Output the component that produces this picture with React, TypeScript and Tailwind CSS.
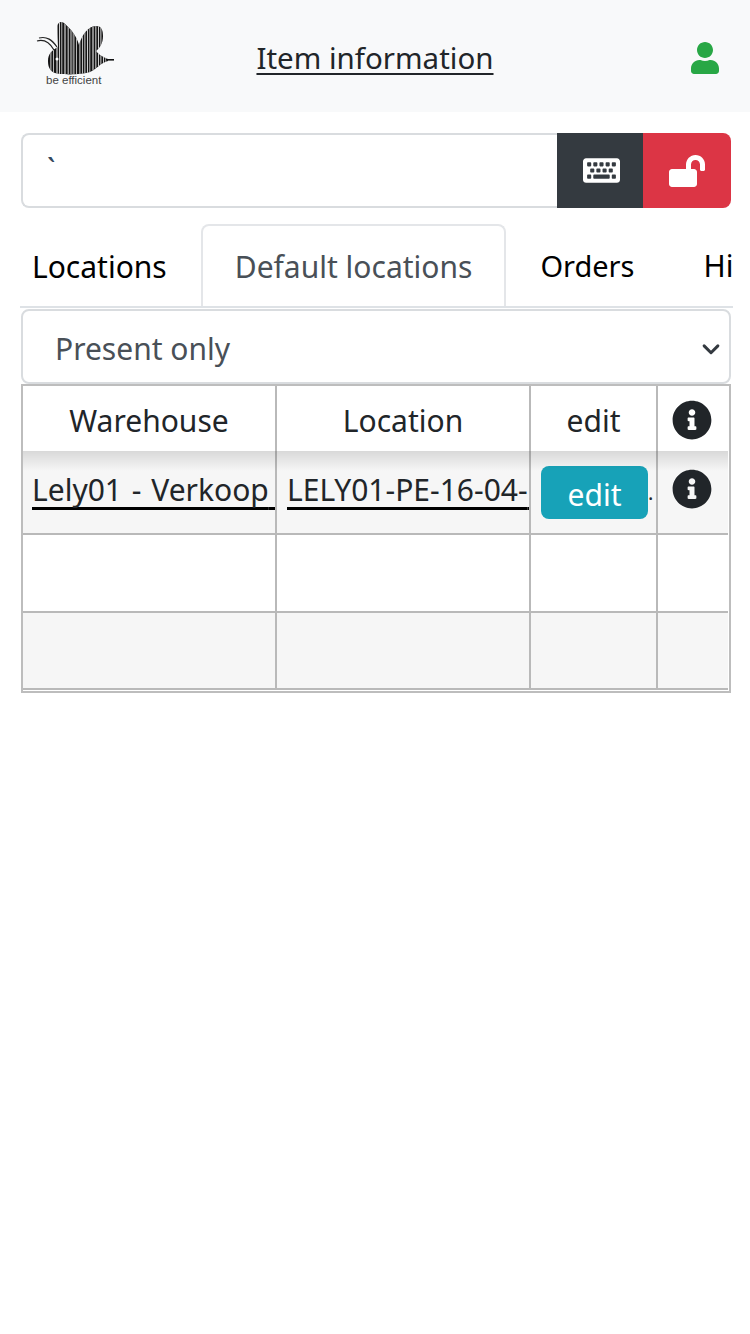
import React from 'react'
import { FaInfoCircle, FaKeyboard, FaLockOpen, FaUser } from 'react-icons/fa'

const font = { fontFamily: '"Noto Sans", "Open Sans", sans-serif' }

// white gaps and grey stripes of the barcode bee
const gaps = [
  [50.5, 0.8], [53, 0.7], [56.5, 1], [59, 0.8], [61.5, 0.7], [64, 2, '#888'], [67.5, 1.5, '#999'], [70, 2.5, '#777'], [73.5, 0.8], [76, 0.7],
  [79.5, 0.8], [82, 0.7], [84.5, 0.8], [87, 0.8], [89.5, 0.7], [92, 2, '#888'], [95, 1.5, '#999'], [98, 0.8], [100.5, 0.8], [103, 0.8], [105.5, 0.8],
] as const

function Logo() {
  return (
    <div className="relative h-[80px] w-[90px] shrink-0">
      <svg width="90" height="70" viewBox="30 15 90 70" className="block blur-[0.4px]">
        <defs>
          <clipPath id="bee">
            <path d="M48 60C48 53 52 49 58 46L57 27C57 21 62 19 65 23C72 29 77 36 79 44C82 34 88 25 96 25C102 25 103 30 103 35C103 42 100 47 96 50C99 54 103 56 108 58L108 60C100 62 97 68 90 71C82 74 60 74 55 72C50 70 48 66 48 60Z" />
          </clipPath>
        </defs>
        <g clipPath="url(#bee)">
          <rect x="45" y="15" width="66" height="65" fill="#151515" />
          {gaps.map(([x, w, c], i) => (
            <rect key={i} x={x} y="15" width={w} height="65" fill={c ?? '#fff'} />
          ))}
        </g>
        <circle cx="57" cy="58" r="1.5" fill="#fff" />
        <path d="M37 40C44 38 50 42 54 49M39 37C47 35 52 39 57 46" fill="none" stroke="#222" strokeWidth="1.2" />
        <path d="M106 58.8H114" stroke="#111" strokeWidth="1.6" />
      </svg>
      <span className="absolute left-[16px] top-[58px] text-[11.5px] leading-[13px] whitespace-nowrap text-[#444]" style={{ fontFamily: '"Liberation Sans", sans-serif' }}>
        be efficient
      </span>
    </div>
  )
}

function Row({ bg = 'bg-white', h, children, className = '' }: { bg?: string; h: string; children?: React.ReactNode; className?: string }) {
  return (
    <div className={`grid grid-cols-[254px_254px_127px_1fr] border-[#b9b9b9] ${bg} ${h} ${className}`}>
      {children ?? (
        <>
          <div className="border-r-2 border-[#b9b9b9]" />
          <div className="border-r-2 border-[#b9b9b9]" />
          <div className="border-r-2 border-[#b9b9b9]" />
          <div />
        </>
      )}
    </div>
  )
}

const linkClass = 'underline decoration-[3px] decoration-black underline-offset-[6px] [text-decoration-skip-ink:none]'

export default function App() {
  return (
    <div className="min-h-[1334px] bg-white text-[30px] text-[#212529]" style={font}>
      <header className="grid h-[112px] grid-cols-[120px_1fr_120px] items-center bg-[#f8f9fa]">
        <div className="pl-[30px]">
          <Logo />
        </div>
        <h1 className="pt-[4px] text-center text-[29.5px] font-normal underline decoration-2 underline-offset-4 [text-decoration-skip-ink:none]">Item information</h1>
        <div className="flex justify-end pr-[29px] pt-[4px]">
          <FaUser size={32} className="text-[#28a745]" />
        </div>
      </header>

      <div className="ml-[21px] mr-[19px] mt-[21px] flex h-[75px]">
        <input
          readOnly
          value="`"
          className="min-w-0 flex-1 rounded-l-[8px] border-2 border-r-0 border-[#d9dcdf] bg-white pb-[3px] pl-[24px] text-[#34495e] outline-none"
        />
        <button className="flex w-[86px] items-center justify-center bg-[#343a40] pl-[2px] text-white">
          <FaKeyboard size={37} />
        </button>
        <button className="flex w-[88px] items-center justify-center rounded-r-[8px] bg-[#dc3545] text-white">
          <FaLockOpen size={36} />
        </button>
      </div>

      <nav className="ml-[20px] mr-[17px] mt-[16px] flex h-[84px] overflow-hidden whitespace-nowrap border-b-2 border-[#dee2e6]">
        <span className="flex items-center pl-[12px] pr-[34px] pt-[3px] text-black">Locations</span>
        <span className="-mb-[2px] flex items-center rounded-t-[8px] border-2 border-b-0 border-[#e4e6e9] bg-white px-[32px] pb-[2px] text-[#495057]">Default locations</span>
        <span className="flex items-center pl-[34px] pr-[69px] pt-[1px] text-[29px] text-black">Orders</span>
        <span className="flex items-center pt-[1px] text-black">History</span>
      </nav>

      <div className="ml-[21px] mr-[19px] mt-[1px] flex h-[75px] items-center justify-between rounded-[8px] border-2 border-[#d9dcdf] pl-[32px] pr-[8px] pt-[4px] text-[#495057]">
        <span>Present only</span>
        <svg width="20" height="20" viewBox="0 0 16 16" fill="none" stroke="#343a40" strokeWidth="2.4" strokeLinecap="round" strokeLinejoin="round">
          <path d="M2.5 5.5 8 11l5.5-5.5" />
        </svg>
      </div>

      <div className="ml-[21px] mr-[19px] h-[309px] border-2 border-[#bdbdbd] pr-[1px]">
        <Row h="h-[65px]">
          <div className="flex items-center justify-center border-r-2 border-[#b9b9b9] pt-[3px]">Warehouse</div>
          <div className="flex items-center justify-center border-r-2 border-[#b9b9b9] pt-[3px]">Location</div>
          <div className="flex items-center justify-center border-r-2 border-[#b9b9b9] pt-[3px]">edit</div>
          <div className="flex items-center justify-center pr-[2px] pt-[2px]">
            <FaInfoCircle size={40} />
          </div>
        </Row>
        <div className="relative">
          <div className="absolute inset-x-0 top-0 h-[20px] bg-gradient-to-b from-black/12 to-transparent" />
          <Row h="h-[84px]" bg="bg-[#f6f6f6]" className="border-b-2">
            <div className="overflow-hidden whitespace-nowrap border-r-2 border-[#b9b9b9] pl-[9px] pt-[16px]">
              <span className={`${linkClass} [word-spacing:2px]`}>Lely01 - Verkoop{'\u00a0\u00a0'}</span>
            </div>
            <div className="overflow-hidden whitespace-nowrap border-r-2 border-[#b9b9b9] pl-[10px] pt-[16px]">
              <span className={linkClass}>LELY01-PE-16-04-{'\u00a0'}</span>
            </div>
            <div className="flex items-start overflow-hidden whitespace-nowrap border-r-2 border-[#b9b9b9] pl-[10px] pt-[15px]">
              <span className="flex h-[53px] w-[107px] shrink-0 items-center justify-center rounded-[8px] bg-[#17a2b8] pt-[4px] text-white">edit</span>
              <span className="pt-[12px] text-[20px]">.</span>
            </div>
            <div className="flex justify-center pr-[2px] pt-[18px]">
              <FaInfoCircle size={40} />
            </div>
          </Row>
        </div>
        <Row h="h-[78px]" className="border-b-2" />
        <Row h="h-[77px]" bg="bg-[#f6f6f6]" className="border-b-2" />
      </div>
    </div>
  )
}
